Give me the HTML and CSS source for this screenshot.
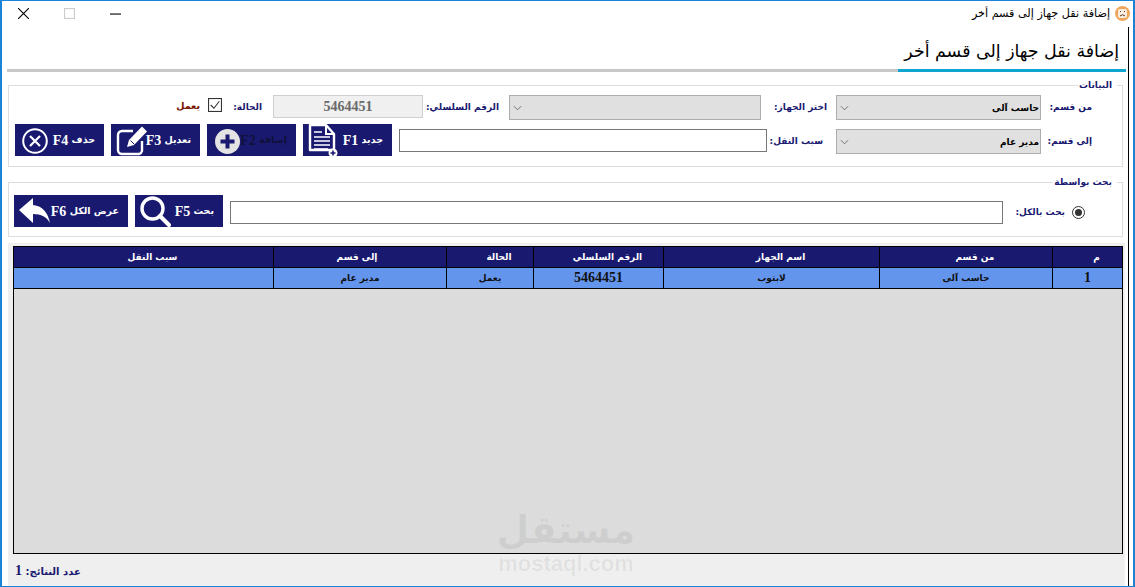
FILE: index.html
```html
<!DOCTYPE html>
<html lang="ar" dir="rtl">
<head>
<meta charset="utf-8">
<title>إضافة نقل جهاز إلى قسم أخر</title>
<link rel="stylesheet" href="styles.css">
</head>
<body>
<div class="window">
  <header class="titlebar">
    <svg class="app-icon" viewBox="0 0 15 15"><circle cx="7.5" cy="7.5" r="7.5" fill="#f0a65a"/><rect x="3" y="3" width="9" height="9" rx="2" fill="#fbeee0"/><path d="M5 5.5h1M9 5.5h1M5 10q2.5-2.5 5 0" stroke="#5a3a20" fill="none"/></svg>
    <span class="window-title">إضافة نقل جهاز إلى قسم أخر</span>
    <div class="controls">
      <svg class="ctl ctl-min" viewBox="0 0 10 10"><path d="M0 5.5h10" stroke="#000"/></svg>
      <svg class="ctl ctl-max" viewBox="0 0 10 10"><rect x=".5" y=".5" width="9" height="9" fill="none" stroke="#ccc"/></svg>
      <svg class="ctl ctl-close" viewBox="0 0 10 10"><path d="M0 0l10 10M10 0L0 10" stroke="#000"/></svg>
    </div>
  </header>
  <main class="content">
    <h1 class="heading"><span>إضافة نقل جهاز إلى قسم أخر</span></h1>

    <fieldset class="group group-data">
      <legend>البيانات</legend>
      <div class="row row-1">
        <label class="lbl lbl-from">من قسم:</label>
        <div class="select select-dept"><span>حاسب آلى</span><svg viewBox="0 0 10 6"><path d="M1 1l4 4 4-4" fill="none" stroke="#666"/></svg></div>
        <label class="lbl lbl-device">اختر الجهاز:</label>
        <div class="select select-device"><svg viewBox="0 0 10 6"><path d="M1 1l4 4 4-4" fill="none" stroke="#666"/></svg></div>
        <label class="lbl lbl-serial">الرقم السلسلي:</label>
        <div class="serial">5464451</div>
        <label class="lbl lbl-state">الحالة:</label>
        <svg class="check" viewBox="0 0 13 13"><rect x=".5" y=".5" width="12" height="12" fill="#fff" stroke="#333"/><path d="M2.5 6.5l3 3 5-6.5" fill="none" stroke="#333"/></svg>
        <span class="working">يعمل</span>
      </div>
      <div class="row row-2">
        <label class="lbl lbl-from">إلى قسم:</label>
        <div class="select select-dept"><span>مدير عام</span><svg viewBox="0 0 10 6"><path d="M1 1l4 4 4-4" fill="none" stroke="#666"/></svg></div>
        <label class="lbl lbl-reason">سبب النقل:</label>
        <div class="input input-reason"></div>
        <div class="buttons">
          <button class="btn"><span class="btn-text">جديد <b>F1</b></span>
            <svg class="ico ico-doc" viewBox="0 0 30 32"><path d="M2 1h16l8 9v16H2z" fill="#191970" stroke="#fff" stroke-width="2.4" stroke-linejoin="round"/><path d="M18 1v9h8" fill="none" stroke="#fff" stroke-width="2"/><path d="M6 8h8M6 13h16M6 17h16M6 21h16M6 25h14" stroke="#fff" stroke-width="1.7"/><circle cx="25" cy="29" r="4.5" fill="#fff"/><path d="M25 26.5v5M22.500 29h5" stroke="#191970" stroke-width="1.6"/></svg>
          </button>
          <button class="btn btn-dim"><span class="btn-text">إضافة <b>F2</b></span>
            <svg class="ico ico-add" viewBox="0 0 25 25"><circle cx="12.500" cy="12.500" r="12.500" fill="#e3e3e3"/><path d="M12.500 5.500v14M5.500 12.500h14" stroke="#191970" stroke-width="4"/></svg>
          </button>
          <button class="btn"><span class="btn-text">تعديل <b>F3</b></span>
            <svg class="ico ico-edit" viewBox="0 0 31 31"><path d="M17 6H6a4 4 0 0 0-4 4v15a4 4 0 0 0 4 4h17a4 4 0 0 0 3-3V16" fill="none" stroke="#fff" stroke-width="2.4"/><path d="M11 22l2-7L26 1.500l5 5L18 20z" fill="#fff"/><path d="M14.500 15.500l4 4" stroke="#191970"/></svg>
          </button>
          <button class="btn"><span class="btn-text">حذف <b>F4</b></span>
            <svg class="ico ico-del" viewBox="0 0 26 26"><circle cx="13" cy="13" r="11.800" fill="none" stroke="#fff" stroke-width="2"/><path d="M8 8l10 10M18 8L8 18" stroke="#fff" stroke-width="2.200"/></svg>
          </button>
        </div>
      </div>
    </fieldset>

    <fieldset class="group group-search">
      <legend>بحث بواسطة</legend>
      <div class="row">
        <svg class="radio" viewBox="0 0 13 13"><circle cx="6.500" cy="6.500" r="6" fill="#fff" stroke="#333"/><circle cx="6.500" cy="6.500" r="3.500" fill="#333"/></svg>
        <label class="lbl lbl-all">بحث بالكل:</label>
        <div class="input input-search"></div>
        <button class="btn btn-search"><span class="btn-text">بحث <b>F5</b></span>
          <svg class="ico ico-find" viewBox="0 0 31 31"><circle cx="12.500" cy="12.500" r="10.500" fill="none" stroke="#fff" stroke-width="3.400"/><path d="M20 20l9 9" stroke="#fff" stroke-width="4" stroke-linecap="round"/></svg>
        </button>
        <button class="btn btn-all"><span class="btn-text">عرض الكل <b>F6</b></span>
          <svg class="ico ico-back" viewBox="0 0 31 25"><path d="M0 12L14 0v7c10 1 15 8 17 18-3-6-9-9-17-9v9z" fill="#fff"/></svg>
        </button>
      </div>
    </fieldset>

    <section class="results">
      <div class="grid">
        <div class="grid-row grid-head">
          <div>م</div><div>من قسم</div><div>اسم الجهاز</div><div>الرقم السلسلي</div><div>الحالة</div><div>إلى قسم</div><div>سبب النقل</div>
        </div>
        <div class="grid-row grid-data">
          <div class="num">1</div><div>حاسب آلى</div><div>لابتوب</div><div class="num">5464451</div><div>يعمل</div><div>مدير عام</div><div></div>
        </div>
      </div>
      <div class="count">عدد النتائج: <b>1</b></div>
      <div class="watermark"><span class="wm-ar">مستقل</span><span class="wm-en">mostaql.com</span></div>
    </section>
  </main>
</div>
</body>
</html>
```
FILE: styles.css
```css
* { box-sizing: border-box; }
html, body { margin: 0; height: 100%; }
body { background: #fff; font-family: "Liberation Serif", "DejaVu Sans", serif; overflow: hidden; }
.window { width: 1135px; height: 587px; border: 2px solid #1883d7; border-top-width: 1px; border-bottom-width: 1px; display: flex; flex-direction: column; background: #fff; }
.titlebar { height: 26px; flex: none; display: flex; align-items: center; padding: 0 3px 2px 0; }
.app-icon { width: 15px; height: 15px; margin-left: 5px; }
.window-title { font-family: "DejaVu Sans", sans-serif; font-size: 11.2px; color: #000; }
.controls { margin-right: auto; display: flex; align-items: center; padding-left: 16px; direction: ltr; flex-direction: row-reverse; }
.ctl { width: 11px; height: 11px; display: block; }
.ctl-max { margin: 0 35px; }
.content { flex: 1; min-height: 0; display: flex; flex-direction: column; margin-right: 4px; border-right: 1px solid #000; padding-left: 5px; position: relative; }
.heading { margin: 0 2px 0 0; height: 45px; font: 400 17.4px "DejaVu Sans", sans-serif; color: #000; border-bottom: 3px solid #c8c8c8; display: flex; position: relative; }
.heading span { width: 228px; padding: 14px 7px 0 0; border-bottom: 3px solid #0ea5d0; height: 45px; white-space: nowrap; }
.group { border: 1px solid #ddd; margin: 0; padding: 0; min-width: 0; width: 1115px; margin-right: 5px; margin-left: 1px; }
.group legend { margin-right: 5px; padding: 0 5px 0 1px; font: 700 9px "DejaVu Sans", sans-serif; color: #191970; height: 11px; line-height: 11px; }
.group-data { height: 87px; margin-top: 8px; }
.group-search { height: 60px; margin-top: 10px; }
.row { display: flex; align-items: flex-start; }
.row-1 { height: 34px; margin-top: 4px; }
.lbl, .working { font: 700 9px "DejaVu Sans", sans-serif; color: #191970; white-space: nowrap; }
.lbl-from { width: 81px; padding: 7px 30px 0 0; }
.select { height: 25px; background: #e0e0e0; border: 1px solid #adadad; display: flex; justify-content: space-between; align-items: center; font: 700 9px "DejaVu Sans", sans-serif; color: #000; padding: 0 1px 0 3px; }
.select svg { width: 9px; height: 6px; }
.select-dept { width: 205px; }
.select-device { width: 252px; justify-content: flex-end; }
.lbl-device { width: 75px; padding: 7px 9px 0 0; }
.lbl-serial { width: 86px; padding: 7px 10px 0 0; }
.serial { width: 150px; height: 23px; background: #f0f0f0; border: 1px solid #cfcfcf; font: 700 14px/22px "Liberation Serif", serif; color: #696969; text-align: center; }
.lbl-state { width: 51px; padding: 7px 11px 0 0; }
.check { width: 14px; height: 14px; margin-top: 3px; }
.working { color: #7a1200; margin-right: 8px; margin-top: 5px; font-size: 9.5px; }
.lbl-reason { width: 69px; padding: 7px 13px 0 0; }
.input { height: 23px; background: #fff; border: 1px solid #777; }
.input-reason { width: 368px; }
.buttons { display: flex; gap: 7px; margin-right: 7px; margin-top: -5px; }
.btn { position: relative; width: 89px; height: 32px; background: #191970; border: 0; padding: 0; color: #fff; display: flex; align-items: center; font: 700 9.5px "DejaVu Sans", sans-serif; }
.btn b { font: 700 14px "Liberation Serif", serif; vertical-align: -2px; }
.btn-text { position: absolute; top: 0; height: 32px; line-height: 32px; white-space: nowrap; right: 9px; }
.btn-dim { color: #10103a; }
.ico { position: absolute; display: block; }
.ico-doc { left: 5px; top: 0; width: 30px; height: 32px; }
.ico-add { left: 8px; top: 5px; width: 25px; height: 25px; }
.ico-edit { left: 5px; top: 1px; width: 31px; height: 31px; }
.ico-del { left: 7px; top: 4px; width: 26px; height: 26px; }
.group-search .row { margin-top: 7px; align-items: flex-start; padding-top: 0; }
.radio { width: 13px; height: 13px; margin: 11px 37px 0 0; flex: none; }
.lbl-all { width: 69px; padding: 12px 7px 0 0; }
.input-search { width: 773px; margin-top: 6px; }
.btn-search { width: 88px; margin-right: 7px; }
.btn-all { width: 114px; margin-right: 7px; }
.btn-all .btn-text { right: 9px; }
.ico-find { left: 5px; top: 1px; width: 31px; height: 31px; }
.ico-back { left: 5px; top: 3px; width: 31px; height: 25px; }
.results { width: 1117px; margin-top: 6px; margin-right: 3px; flex: 1; background: #efefef; padding: 3px 2px 0 5px; position: relative; }
.grid { width: 1110px; height: 308px; border: 1px solid #000; background: #dcdcdc; }
.grid-row { display: grid; grid-template-columns: 70px 173px 216px 130px 87px 173px 259px; height: 21px; border-bottom: 1px solid #000; font: 700 9px/19px "DejaVu Sans", sans-serif; text-align: center; }
.grid-row > div { border-left: 1px solid #000; height: 20px; }
.grid-row > div:last-child { border-left: 0; }
.grid-head { background: #191970; color: #fff; line-height: 21px; }
.grid-head > div { padding-left: 18px; }
.grid-head > div:nth-child(6) { padding: 0 6px 0 0; }
.grid-data { background: #6495ed; color: #111; line-height: 21px; }
.grid-data .num { font: 700 14px/20px "Liberation Serif", serif; }
.count { position: absolute; left: 7px; bottom: 7px; font: 700 10px "DejaVu Sans", sans-serif; color: #191970; white-space: nowrap; }
.count b { font: 700 14px "Liberation Serif", serif; }
.watermark { position: absolute; left: 488px; top: 264px; width: 140px; display: flex; flex-direction: column; align-items: center; color: rgba(0,0,0,.06); pointer-events: none; }
.wm-ar { font: 700 38px/46px "DejaVu Sans", sans-serif; }
.wm-en { font: 700 22px/22px "Liberation Sans", sans-serif; direction: ltr; }
```
